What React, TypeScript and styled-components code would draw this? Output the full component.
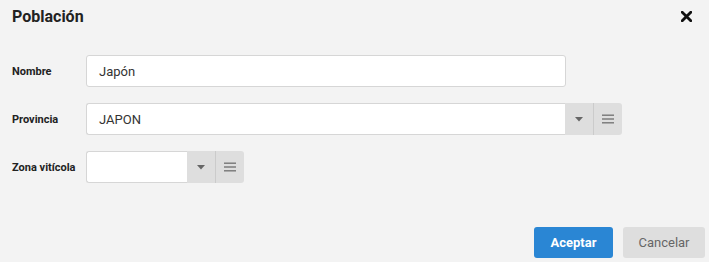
import React from "react";
import styled, { createGlobalStyle } from "styled-components";

const Global = createGlobalStyle`
  html, body { margin: 0; padding: 0; background: #f3f3f3; }
  body { font-family: Roboto, "Liberation Sans", Arial, sans-serif; }
  * { box-sizing: border-box; }
`;

const Dialog = styled.div`
  width: 709px;
  height: 262px;
  background: #f3f3f3;
  display: flex;
  flex-direction: column;
`;

const Header = styled.div`
  height: 33px;
  display: flex;
  align-items: center;
  justify-content: space-between;
  padding: 0 12px 0 12px;
`;

const Title = styled.h1`
  margin: 0;
  font-size: 16px;
  font-weight: 700;
  color: #222;
  line-height: 20px;
`;

const CloseButton = styled.button`
  border: 0;
  background: transparent;
  padding: 0;
  width: 14px;
  height: 14px;
  display: flex;
  align-items: center;
  justify-content: center;
  margin-right: 4px;
  cursor: pointer;
`;

const Form = styled.div`
  display: flex;
  flex-direction: column;
  gap: 16px;
  padding: 22px 0 0 12px;
`;

const Row = styled.div`
  display: flex;
  align-items: center;
  height: 32px;
`;

const Label = styled.label`
  width: 74px;
  flex: none;
  font-size: 11px;
  font-weight: 700;
  color: #222;
`;

const TextInput = styled.div<{ $width: number }>`
  width: ${(p) => p.$width}px;
  height: 32px;
  background: #fff;
  border: 1px solid #d6d6d6;
  border-radius: 3px;
  display: flex;
  align-items: center;
  padding-left: 12px;
  font-size: 13px;
  color: #333;
`;

const Combo = styled.div`
  display: flex;
  height: 32px;
`;

const ComboInput = styled(TextInput)`
  border-radius: 3px 0 0 3px;
  border-right: 0;
`;

const ComboButton = styled.div<{ $last?: boolean; $width: number }>`
  width: ${(p) => p.$width}px;
  height: 32px;
  background: #dedede;
  display: flex;
  align-items: center;
  justify-content: center;
  border-left: ${(p) => (p.$last ? "1px solid #cbcbcb" : "0")};
  border-radius: ${(p) => (p.$last ? "0 3px 3px 0" : "0")};
`;

const Footer = styled.div`
  display: flex;
  justify-content: flex-end;
  gap: 10px;
  padding-right: 4px;
  margin-top: 44px;
`;

const Button = styled.button<{ $primary?: boolean; $width: number }>`
  width: ${(p) => p.$width}px;
  height: 31px;
  border: 0;
  border-radius: 3px;
  font-family: Roboto, "Liberation Sans", Arial, sans-serif;
  font-size: 13px;
  font-weight: ${(p) => (p.$primary ? 700 : 400)};
  background: ${(p) => (p.$primary ? "#2a86d4" : "#dedede")};
  color: ${(p) => (p.$primary ? "#fff" : "#666")};
  cursor: pointer;
`;

const Caret = () => (
  <svg width="8" height="5" viewBox="0 0 8 5">
    <path d="M0 0 L8 0 L4 4.5 Z" fill="#666" />
  </svg>
);

const Bars = () => (
  <svg width="12" height="10" viewBox="0 0 12 10">
    <rect x="0" y="0.5" width="12" height="1.4" fill="#777" />
    <rect x="0" y="4.3" width="12" height="1.4" fill="#777" />
    <rect x="0" y="8.1" width="12" height="1.4" fill="#777" />
  </svg>
);

const CloseIcon = () => (
  <svg width="11" height="11" viewBox="0 0 11 11">
    <path d="M1.2 1.2 L9.8 9.8 M9.8 1.2 L1.2 9.8" stroke="#111" strokeWidth="2.8" strokeLinecap="square" />
  </svg>
);

export default function App() {
  return (
    <>
      <Global />
      <Dialog>
        <Header>
          <Title>Población</Title>
          <CloseButton aria-label="Cerrar">
            <CloseIcon />
          </CloseButton>
        </Header>
        <Form>
          <Row>
            <Label>Nombre</Label>
            <TextInput $width={480}>Japón</TextInput>
          </Row>
          <Row>
            <Label>Provincia</Label>
            <Combo>
              <ComboInput $width={479}>JAPON</ComboInput>
              <ComboButton $width={28}>
                <Caret />
              </ComboButton>
              <ComboButton $width={29} $last>
                <Bars />
              </ComboButton>
            </Combo>
          </Row>
          <Row>
            <Label>Zona vitícola</Label>
            <Combo>
              <ComboInput $width={101} />
              <ComboButton $width={28}>
                <Caret />
              </ComboButton>
              <ComboButton $width={29} $last>
                <Bars />
              </ComboButton>
            </Combo>
          </Row>
        </Form>
        <Footer>
          <Button $primary $width={79}>Aceptar</Button>
          <Button $width={82}>Cancelar</Button>
        </Footer>
      </Dialog>
    </>
  );
}
